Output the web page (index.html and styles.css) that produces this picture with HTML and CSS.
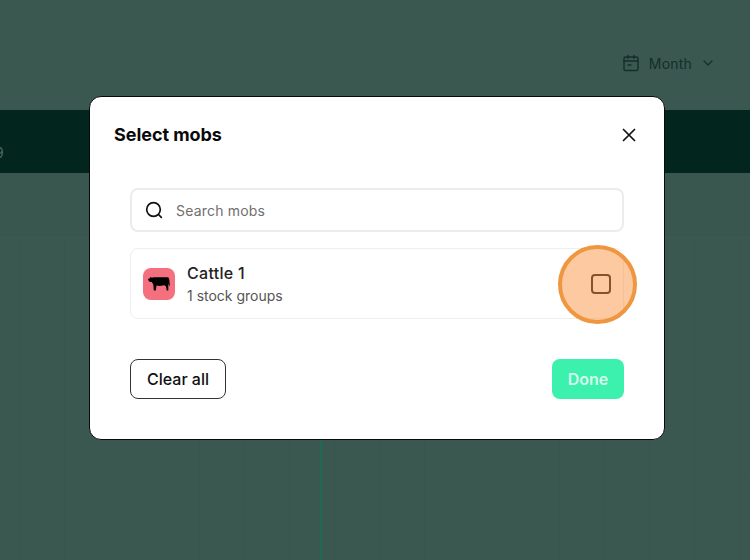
FILE: index.html
```html
<!DOCTYPE html>
<html lang="en">
<head>
<meta charset="utf-8">
<title>Select mobs</title>
<link rel="stylesheet" href="styles.css">
</head>
<body>
<div class="page">
  <header class="topbar">
    <div class="period">
      <svg class="cal" width="18" height="18" viewBox="0 0 18 18" fill="none" stroke="currentColor" stroke-width="1.4" stroke-linecap="round" stroke-linejoin="round"><rect x="2" y="3" width="14" height="13.5" rx="1.6"/><path d="M2 7h14M6 1.5v3M12 1.5v3M6 11h3"/></svg>
      <span>Month</span>
      <svg class="chev" width="12" height="12" viewBox="0 0 12 12" fill="none" stroke="currentColor" stroke-width="1.3" stroke-linecap="round" stroke-linejoin="round"><path d="M2 4l4 4 4-4"/></svg>
    </div>
  </header>
  <div class="band"><span class="band-num">9</span></div>
  <div class="subrow"></div>
  <div class="chart"><div class="now"></div></div>
</div>

<div class="modal">
  <div class="modal-head">
    <h2>Select mobs</h2>
    <svg class="close" width="16" height="16" viewBox="0 0 16 16" fill="none" stroke="#111" stroke-width="1.7" stroke-linecap="round"><path d="M2.500 2.500l11 11M13.500 2.500l-11 11"/></svg>
  </div>
  <div class="modal-body">
    <div class="search">
      <svg width="20" height="20" viewBox="0 0 20 20" fill="none" stroke="#111" stroke-width="1.7" stroke-linecap="round"><circle cx="9.500" cy="9.500" r="6.800"/><path d="M14.500 14.500l2.800 2.800"/></svg>
      <span>Search mobs</span>
    </div>
    <div class="mob">
      <div class="mob-icon">
        <svg width="22" height="15" viewBox="0 0 22 15" fill="#000"><path d="M0 3L1.500 2.400 2.500 1 4 1.800 5.500 1.200H19L20.500 1.600 21.300 3.400 21.800 9.500 21 10 20.700 7.500 20.300 9 20.300 14.500H18.700L18 10.500 16.500 9.200 11.500 10 8.500 9.600 7.800 14.500H6.300L5.800 14.500 5.300 8.400 3.800 6H2L.6 4.800z"/></svg>
      </div>
      <div class="mob-text">
        <div class="mob-name">Cattle 1</div>
        <div class="mob-sub">1 stock groups</div>
      </div>
      <div class="check"></div>
    </div>
  </div>
  <div class="modal-foot">
    <button class="btn btn-clear">Clear all</button>
    <button class="btn btn-done">Done</button>
  </div>
</div>

<div class="spot"></div>
</body>
</html>
```

FILE: styles.css
```css
* { box-sizing: border-box; }
html, body { margin: 0; height: 100%; }
body {
  position: relative;
  width: 750px;
  height: 560px;
  overflow: hidden;
  background: #3a5850;
  font-family: Inter, "Liberation Sans", sans-serif;
}
.page { display: flex; flex-direction: column; height: 560px; }
.topbar {
  height: 110px;
  flex: none;
  display: flex;
  justify-content: flex-end;
  align-items: flex-start;
  padding: 55px 36px 0 0;
  color: #142e28;
}
.period { display: flex; align-items: center; gap: 8px; font-size: 14px; line-height: 18px; letter-spacing: 0.2px; }
.cal { margin-top: -2px; margin-right: 1px; }
.chev { margin-left: 2px; margin-top: -2px; }
.band { height: 63px; flex: none; background: #02261d; position: relative; overflow: hidden; }
.band-num { position: absolute; left: -5px; top: 34px; color: #4b6a62; font-size: 14px; line-height: 18px; }
.subrow { height: 64px; flex: none; background: #39564f; }
.chart {
  flex: 1;
  position: relative;
  background-image:
    linear-gradient(180deg, #3d5952 0 1px, transparent 1px 238px, #39574f 238px 239px, transparent 239px),
    repeating-linear-gradient(90deg, transparent 0 19px, #38554e 19px 20px, transparent 20px 45px);
}
.now { position: absolute; left: 320px; top: 0; bottom: 0; width: 2px; background: #1f6a52; }

.modal {
  position: absolute;
  left: 89px;
  top: 96px;
  width: 576px;
  height: 344px;
  background: #fff;
  border: 1px solid #0a0a0a;
  border-radius: 12px;
  padding: 0 40px;
  display: flex;
  flex-direction: column;
}
.modal-head {
  margin: 0 -16px;
  height: 76px;
  flex: none;
  display: flex;
  align-items: center;
  justify-content: space-between;
  padding-right: 3px;
}
.modal-head h2 { margin: 0; font-size: 18px; line-height: 24px; font-weight: 700; letter-spacing: -0.05px; color: #0a0a0a; }
.modal-body { padding-top: 15px; display: flex; flex-direction: column; gap: 16px; }
.search {
  height: 44px;
  border: 2px solid #ececec;
  border-radius: 8px;
  display: flex;
  align-items: center;
  gap: 12px;
  padding-left: 12px;
  font-size: 14px;
  color: #6f6f6f;
  letter-spacing: 0.2px;
}
.mob {
  height: 71px;
  border: 1px solid #eeeeee;
  border-radius: 8px;
  display: flex;
  align-items: center;
  gap: 12px;
  padding: 0 12px;
}
.mob-icon {
  width: 32px;
  height: 32px;
  border-radius: 8px;
  background: #f5707f;
  display: flex;
  align-items: center;
  justify-content: center;
}
.mob-text { display: flex; flex-direction: column; gap: 2px; padding-top: 1px; flex: 1; }
.mob-name { font-size: 16px; line-height: 22px; font-weight: 500; letter-spacing: 0.3px; color: #222; }
.mob-sub { font-size: 14px; line-height: 20px; color: #555; }
.check { width: 20px; height: 20px; border: 2px solid #111; border-radius: 4px; flex: none; }
.modal-foot { margin-top: 40px; display: flex; justify-content: space-between; }
.btn { height: 40px; border-radius: 8px; font-family: inherit; font-size: 16px; font-weight: 600; padding: 0; }
.btn-clear { width: 96px; background: #fff; border: 1px solid #333; color: #0f0f0f; font-weight: 500; }
.btn-done { width: 72px; background: #3cf0ad; border: 0; color: #d6fbee; }

.spot {
  position: absolute;
  left: 558px;
  top: 245px;
  width: 79px;
  height: 79px;
  border-radius: 50%;
  background: rgba(251, 147, 65, 0.5);
  border: 4px solid #ee9640;
}
```
